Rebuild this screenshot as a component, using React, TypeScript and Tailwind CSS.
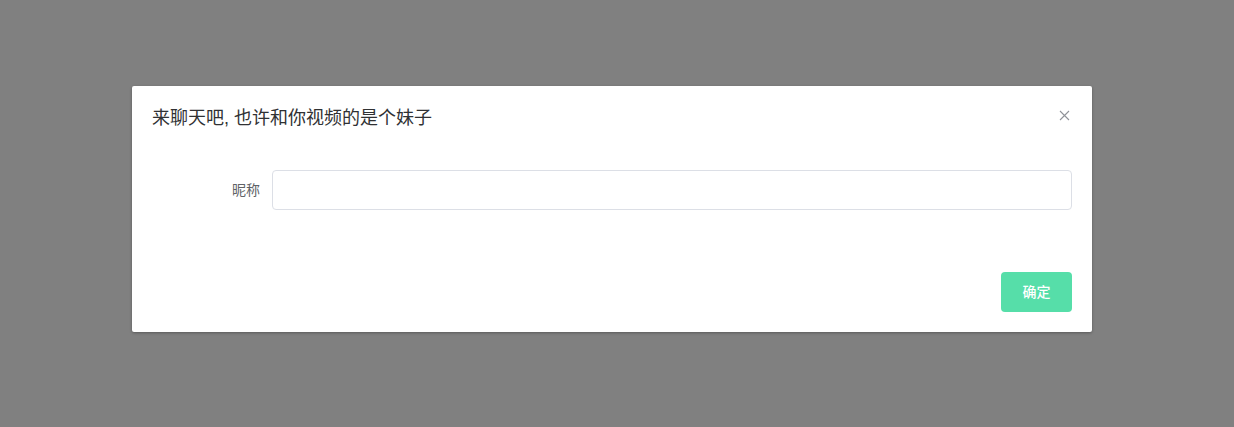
import { FC } from "react";

const App: FC = () => {
  return (
    <div
      className="w-[1234px] h-[427px] bg-[#808080] pt-[86px] pl-[132px]"
      style={{ fontFamily: '"Helvetica Neue", "Liberation Sans", "Noto Sans CJK SC", sans-serif' }}
    >
      <div className="w-[960px] bg-white rounded-[2px] shadow-[0_1px_3px_rgba(0,0,0,0.3)]">
        {/* Header */}
        <div className="relative px-5 pt-5 pb-[10px]">
          <span className="block text-[18px] leading-6 text-[#303133]">来聊天吧, 也许和你视频的是个妹子</span>
          <button className="absolute top-[21px] right-5 w-4 h-4 flex items-center justify-center text-[#909399]">
            <svg width="11" height="11" viewBox="0 0 11 11" fill="none" stroke="currentColor" strokeWidth="1.1">
              <path d="M1 1L10 10M10 1L1 10" />
            </svg>
          </button>
        </div>

        {/* Body */}
        <div className="px-5 py-[30px]">
          <div className="flex mb-[22px]">
            <label className="w-[120px] pr-3 text-right text-sm leading-10 text-[#606266]">昵称</label>
            <input
              type="text"
              className="flex-1 h-10 px-[15px] border border-[#dcdfe6] rounded text-sm text-[#606266] outline-none"
            />
          </div>
        </div>

        {/* Footer */}
        <div className="flex justify-end px-5 pt-[10px] pb-5">
          <button className="w-[71px] h-10 rounded bg-[#56dea9] text-white text-sm font-medium">确定</button>
        </div>
      </div>
    </div>
  );
};

export default App;
